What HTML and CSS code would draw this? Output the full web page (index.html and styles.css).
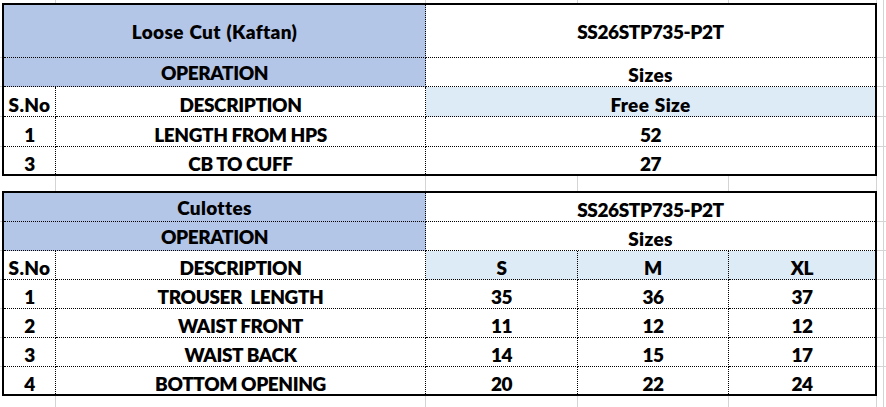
FILE: index.html
```html
<!DOCTYPE html>
<html lang="en">
<head>
<meta charset="utf-8">
<title>Measurement Sheet</title>
<link rel="stylesheet" href="styles.css">
</head>
<body>
<main class="sheet">
  <section class="tbl t1">
    <div class="c blue span2 mid mixed">Loose Cut (Kaftan)</div>
    <div class="c span3 end mid">SS26STP735-P2T</div>
    <div class="c blue span2 mid">OPERATION</div>
    <div class="c span3 end mixed">Sizes</div>
    <div class="c mixed">S.No</div>
    <div class="c">DESCRIPTION</div>
    <div class="c light span3 end mixed">Free Size</div>
    <div class="c">1</div>
    <div class="c">LENGTH FROM HPS</div>
    <div class="c span3 end">52</div>
    <div class="c last">3</div>
    <div class="c last">CB TO CUFF</div>
    <div class="c span3 end last">27</div>
  </section>

  <section class="tbl t2">
    <div class="c blue span2 mid mixed">Culottes</div>
    <div class="c span3 end">SS26STP735-P2T</div>
    <div class="c blue span2 mid">OPERATION</div>
    <div class="c span3 end mixed">Sizes</div>
    <div class="c mixed">S.No</div>
    <div class="c">DESCRIPTION</div>
    <div class="c light">S</div>
    <div class="c light">M</div>
    <div class="c light end">XL</div>

    <div class="c">1</div>
    <div class="c">TROUSER&nbsp; LENGTH</div>
    <div class="c">35</div>
    <div class="c">36</div>
    <div class="c end">37</div>

    <div class="c">2</div>
    <div class="c">WAIST FRONT</div>
    <div class="c">11</div>
    <div class="c">12</div>
    <div class="c end">12</div>

    <div class="c">3</div>
    <div class="c">WAIST BACK</div>
    <div class="c">14</div>
    <div class="c">15</div>
    <div class="c end">17</div>

    <div class="c last">4</div>
    <div class="c last">BOTTOM OPENING</div>
    <div class="c last">20</div>
    <div class="c last">22</div>
    <div class="c end last">24</div>
  </section>
</main>
</body>
</html>
```

FILE: styles.css
```css
* { box-sizing: border-box; }

html, body {
  margin: 0;
  padding: 0;
}

body {
  width: 886px;
  height: 407px;
  overflow: hidden;
  background-color: #ffffff;
  font-family: "Lato", "Open Sans", sans-serif;
  font-weight: 800;
  color: #000;
  background-image:
    linear-gradient(to right, transparent 55px, #d4d4d4 55px, #d4d4d4 56px, transparent 56px),
    linear-gradient(to right, transparent 425px, #d4d4d4 425px, #d4d4d4 426px, transparent 426px),
    linear-gradient(to right, transparent 577px, #d4d4d4 577px, #d4d4d4 578px, transparent 578px),
    linear-gradient(to right, transparent 728px, #d4d4d4 728px, #d4d4d4 729px, transparent 729px),
    linear-gradient(to right, transparent 876px, #d4d4d4 876px, #d4d4d4 877px, transparent 877px),
    linear-gradient(to right, transparent 883px, #d4d4d4 883px, #d4d4d4 884px, transparent 884px),
    linear-gradient(to bottom, transparent 57px, #d4d4d4 57px, #d4d4d4 58px, transparent 58px),
    linear-gradient(to bottom, transparent 86px, #d4d4d4 86px, #d4d4d4 87px, transparent 87px),
    linear-gradient(to bottom, transparent 116px, #d4d4d4 116px, #d4d4d4 117px, transparent 117px),
    linear-gradient(to bottom, transparent 146px, #d4d4d4 146px, #d4d4d4 147px, transparent 147px),
    linear-gradient(to bottom, transparent 221px, #d4d4d4 221px, #d4d4d4 222px, transparent 222px),
    linear-gradient(to bottom, transparent 250px, #d4d4d4 250px, #d4d4d4 251px, transparent 251px),
    linear-gradient(to bottom, transparent 279px, #d4d4d4 279px, #d4d4d4 280px, transparent 280px),
    linear-gradient(to bottom, transparent 308px, #d4d4d4 308px, #d4d4d4 309px, transparent 309px),
    linear-gradient(to bottom, transparent 337px, #d4d4d4 337px, #d4d4d4 338px, transparent 338px),
    linear-gradient(to bottom, transparent 366px, #d4d4d4 366px, #d4d4d4 367px, transparent 367px);
}

.sheet {
  padding: 3px 0 0 2px;
  display: flex;
  flex-direction: column;
  gap: 15px;
  align-items: flex-start;
}

.tbl {
  display: grid;
  grid-template-columns: 52px 370px 152px 151px 146px;
  border: 2px solid #000;
  background: #fff;
  width: fit-content;
}

.t1 {
  grid-template-rows: 53px 29px 30px 30px 27px;
}

.t2 {
  grid-template-rows: 29px 29px 29px 29px 29px 29px 27px;
}

.c {
  display: flex;
  align-items: center;
  justify-content: center;
  border-right: 1px dotted #000;
  border-bottom: 1px dotted #000;
  font-size: 19px;
  letter-spacing: -0.4px;
  line-height: 1;
  padding-top: 5px;
  white-space: nowrap;
  background: #fff;
}

.c.mixed {
  letter-spacing: 0.3px;
  word-spacing: 1px;
}

.c.mid { padding-top: 1px; }

.span2 { grid-column: span 2; }
.span3 { grid-column: span 3; }

.end { border-right: none; }
.last { border-bottom: none; }

.blue { background: #b4c6e7; }
.light { background: #ddebf7; }
```
